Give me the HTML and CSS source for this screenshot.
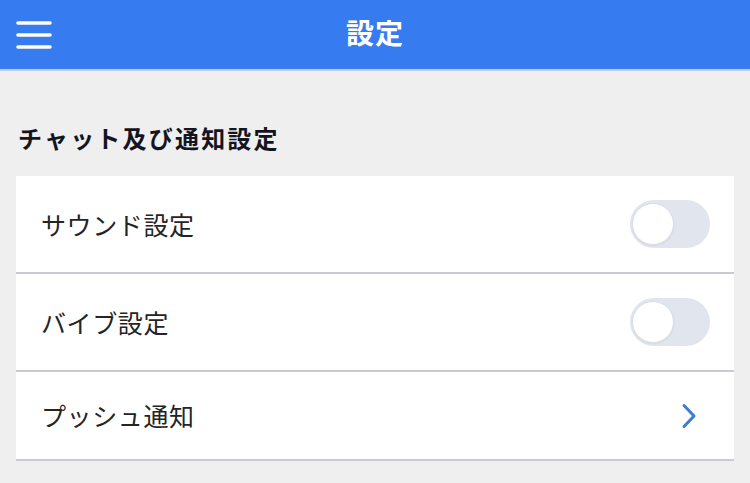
FILE: index.html
```html
<!DOCTYPE html>
<html lang="ja">
<head>
<meta charset="utf-8">
<title>設定</title>
<link rel="stylesheet" href="styles.css">
</head>
<body>
<header class="appbar">
  <button class="menu-btn" aria-label="メニュー">
    <svg width="36" height="30" viewBox="0 0 36 30" aria-hidden="true">
      <g stroke="#ffffff" stroke-width="3.6" stroke-linecap="round">
        <line x1="2" y1="4" x2="34" y2="4"/>
        <line x1="2" y1="16" x2="34" y2="16"/>
        <line x1="2" y1="28" x2="34" y2="28"/>
      </g>
    </svg>
  </button>
  <h1 class="appbar-title">設定</h1>
  <span class="appbar-spacer"></span>
</header>

<main class="content">
  <h2 class="section-title">チャット及び通知設定</h2>
  <ul class="card">
    <li class="row">
      <span class="row-label">サウンド設定</span>
      <span class="toggle"><span class="knob"></span></span>
    </li>
    <li class="row">
      <span class="row-label">バイブ設定</span>
      <span class="toggle"><span class="knob"></span></span>
    </li>
    <li class="row row-link">
      <span class="row-label">プッシュ通知</span>
      <svg class="chevron" width="16" height="26" viewBox="0 0 16 26" aria-hidden="true">
        <path d="M3 2.5 L13 13 L3 23.5" fill="none" stroke="#3a7bd8" stroke-width="3" stroke-linecap="round" stroke-linejoin="round"/>
      </svg>
    </li>
  </ul>
</main>
</body>
</html>
```

FILE: styles.css
```css
html, body {
  margin: 0;
  padding: 0;
}

body {
  background: #efeff0;
  font-family: "Noto Sans CJK JP", "Noto Sans", sans-serif;
  color: #222222;
  width: 750px;
  height: 483px;
  overflow: hidden;
}

.appbar {
  height: 69px;
  background: #367bef;
  border-bottom: 2px solid #c6cde3;
  display: grid;
  grid-template-columns: 1fr auto 1fr;
  align-items: center;
}

.menu-btn {
  justify-self: start;
  background: none;
  border: 0;
  padding: 0;
  margin-left: 16px;
  margin-top: -2px;
  display: flex;
}

.appbar-title {
  margin: 0;
  margin-top: -5px;
  color: #ffffff;
  font-size: 28px;
  font-weight: 700;
  letter-spacing: 1px;
  line-height: 40px;
}

.content {
  padding: 51px 16px 0;
}

.section-title {
  margin: 0 0 22px 2px;
  font-size: 24px;
  font-weight: 700;
  line-height: 32px;
  letter-spacing: 2.2px;
  color: #15151f;
}

.card {
  list-style: none;
  margin: 0;
  padding: 0;
  background: #ffffff;
}

.row {
  display: flex;
  align-items: center;
  justify-content: space-between;
  padding: 24px 24px 24px 25px;
  border-bottom: 2px solid #c9c8d6;
}

.row-label {
  font-size: 25px;
  line-height: 39px;
  letter-spacing: 0.6px;
  color: #242424;
}

.toggle {
  width: 80px;
  height: 48px;
  border-radius: 24px;
  background: #e1e5ee;
  display: flex;
  align-items: center;
  padding: 0 2px;
  box-sizing: border-box;
}

.knob {
  width: 42px;
  height: 42px;
  border-radius: 50%;
  background: #ffffff;
  border: 1px solid #d9dde6;
  box-sizing: border-box;
  box-shadow: 0 1px 2px rgba(0, 0, 0, 0.06);
}

.chevron {
  margin-right: 13px;
}
```
